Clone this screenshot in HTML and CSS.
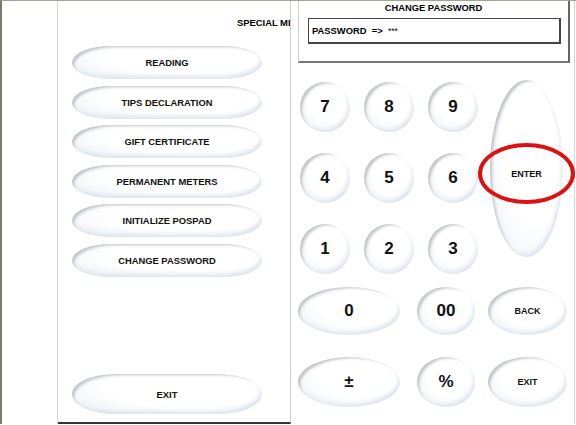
FILE: index.html
```html
<!DOCTYPE html>
<html lang="en">
  <head>
    <meta charset="UTF-8" />
    <title>Special Menu - Change Password</title>
    <link rel="stylesheet" href="styles.css">
  </head>
  <body>
    <div class="frame">
      <div class="side"></div>

      <div class="menu">
        <div class="menu-title">SPECIAL MENU</div>
        <div class="menu-list">
          <button class="pill">READING</button>
          <button class="pill">TIPS DECLARATION</button>
          <button class="pill">GIFT CERTIFICATE</button>
          <button class="pill">PERMANENT METERS</button>
          <button class="pill">INITIALIZE POSPAD</button>
          <button class="pill">CHANGE PASSWORD</button>
        </div>
        <button class="pill pill-exit">EXIT</button>
      </div>

      <div class="pad">
        <div class="pw-box">
          <div class="pw-title">CHANGE PASSWORD</div>
          <div class="pw-field">PASSWORD&nbsp;&nbsp;=&gt;&nbsp;&nbsp;<span class="stars">***</span></div>
        </div>

        <div class="keys-top">
          <div class="digits">
            <button class="key">7</button>
            <button class="key">8</button>
            <button class="key">9</button>
            <button class="key">4</button>
            <button class="key">5</button>
            <button class="key">6</button>
            <button class="key">1</button>
            <button class="key">2</button>
            <button class="key">3</button>
          </div>
          <div class="enter-wrap">
            <button class="key key-enter"></button>
            <div class="ring">ENTER</div>
          </div>
        </div>

        <div class="keys-row row-a">
          <button class="key key-wide">0</button>
          <button class="key key-mid">00</button>
          <button class="key key-side">BACK</button>
        </div>
        <div class="keys-row row-b">
          <button class="key key-wide">±</button>
          <button class="key key-mid">%</button>
          <button class="key key-side">EXIT</button>
        </div>
      </div>
    </div>
  </body>
</html>
```

FILE: styles.css
```css
* {
  box-sizing: border-box;
  margin: 0;
  padding: 0;
}

body {
  font-family: "Liberation Sans", Arial, sans-serif;
  background: #fff;
  width: 576px;
  height: 425px;
  overflow: hidden;
}

button {
  font-family: inherit;
  border: none;
  color: #111;
  cursor: pointer;
}

.frame {
  display: flex;
  height: 424px;
  border-top: 1px solid #a2a294;
  border-left: 2px solid #7b7b6b;
}

.side {
  width: 56px;
  border-right: 1px solid #d4d4d4;
}

/* left menu */
.menu {
  width: 233px;
  display: flex;
  flex-direction: column;
  border-right: 1px solid #cfcfcf;
  border-bottom: 2px solid #333;
  padding-bottom: 8px;
}

.menu-title {
  padding: 16px 0 0 179px;
  line-height: 12px;
  font-size: 9.4px;
  font-weight: bold;
  white-space: nowrap;
  overflow: hidden;
}

.menu-list {
  display: flex;
  flex-direction: column;
  gap: 6.6px;
  margin-top: 17px;
}

.pill,
.key {
  background: radial-gradient(ellipse at 62% 35%, #ffffff 50%, #f5f7fa 72%, #e3e9f0 100%);
  box-shadow: inset 4px 3px 3px -2px #bfc3c8, inset -3px -4px 5px -2px #d9e2ec;
  font-weight: bold;
}

.pill {
  margin-left: 14px;
  width: 190px;
  height: 33px;
  border-radius: 40px / 17px;
  font-size: 9.4px;
}

.pill-exit {
  margin-top: auto;
  height: 40px;
  border-radius: 44px / 20px;
}

/* right keypad */
.pad {
  width: 284px;
  border-right: 1px solid #d6d6d6;
}

.pw-box {
  margin-left: 7px;
  width: 272px;
  height: 62px;
  border-left: 1px solid #d0d0d0;
  border-right: 2px solid #666;
  border-bottom: 2px solid #777;
}

.pw-title {
  padding-top: 1px;
  line-height: 12px;
  text-align: center;
  font-size: 9.4px;
  font-weight: bold;
}

.pw-field {
  margin: 4px 0 0 9px;
  width: 253px;
  height: 26px;
  border: 1px solid #444;
  border-right-width: 2px;
  border-bottom-width: 2px;
  padding-left: 3px;
  line-height: 23px;
  font-size: 9.4px;
  font-weight: bold;
}

.stars {
  font-size: 8.5px;
  font-weight: normal;
}

.keys-top {
  display: flex;
  margin-top: 19px;
}

.digits {
  display: grid;
  grid-template-columns: repeat(3, 50px);
  grid-auto-rows: 50px;
  column-gap: 14px;
  row-gap: 21px;
  margin-left: 9px;
}

.key {
  border-radius: 50%;
  font-size: 17px;
}

.enter-wrap {
  position: relative;
  margin-left: 12px;
}

.key-enter {
  width: 73px;
  height: 177px;
  margin-top: -2px;
  display: block;
}

.ring {
  position: absolute;
  left: -12px;
  top: 61px;
  width: 97px;
  height: 61px;
  border: 4px solid #dd1111;
  border-radius: 50%;
  display: flex;
  align-items: center;
  justify-content: center;
  font-size: 9px;
  font-weight: bold;
  color: #111;
}

.keys-row {
  display: flex;
  margin-left: 7px;
}

.row-a {
  margin-top: 13px;
  height: 48px;
}

.row-b {
  margin-top: 22px;
  height: 50px;
}

.key-wide {
  width: 102px;
}

.key-mid {
  width: 58px;
  margin-left: 17px;
}

.key-side {
  width: 79px;
  margin-left: 13px;
  font-size: 9px;
}
```
